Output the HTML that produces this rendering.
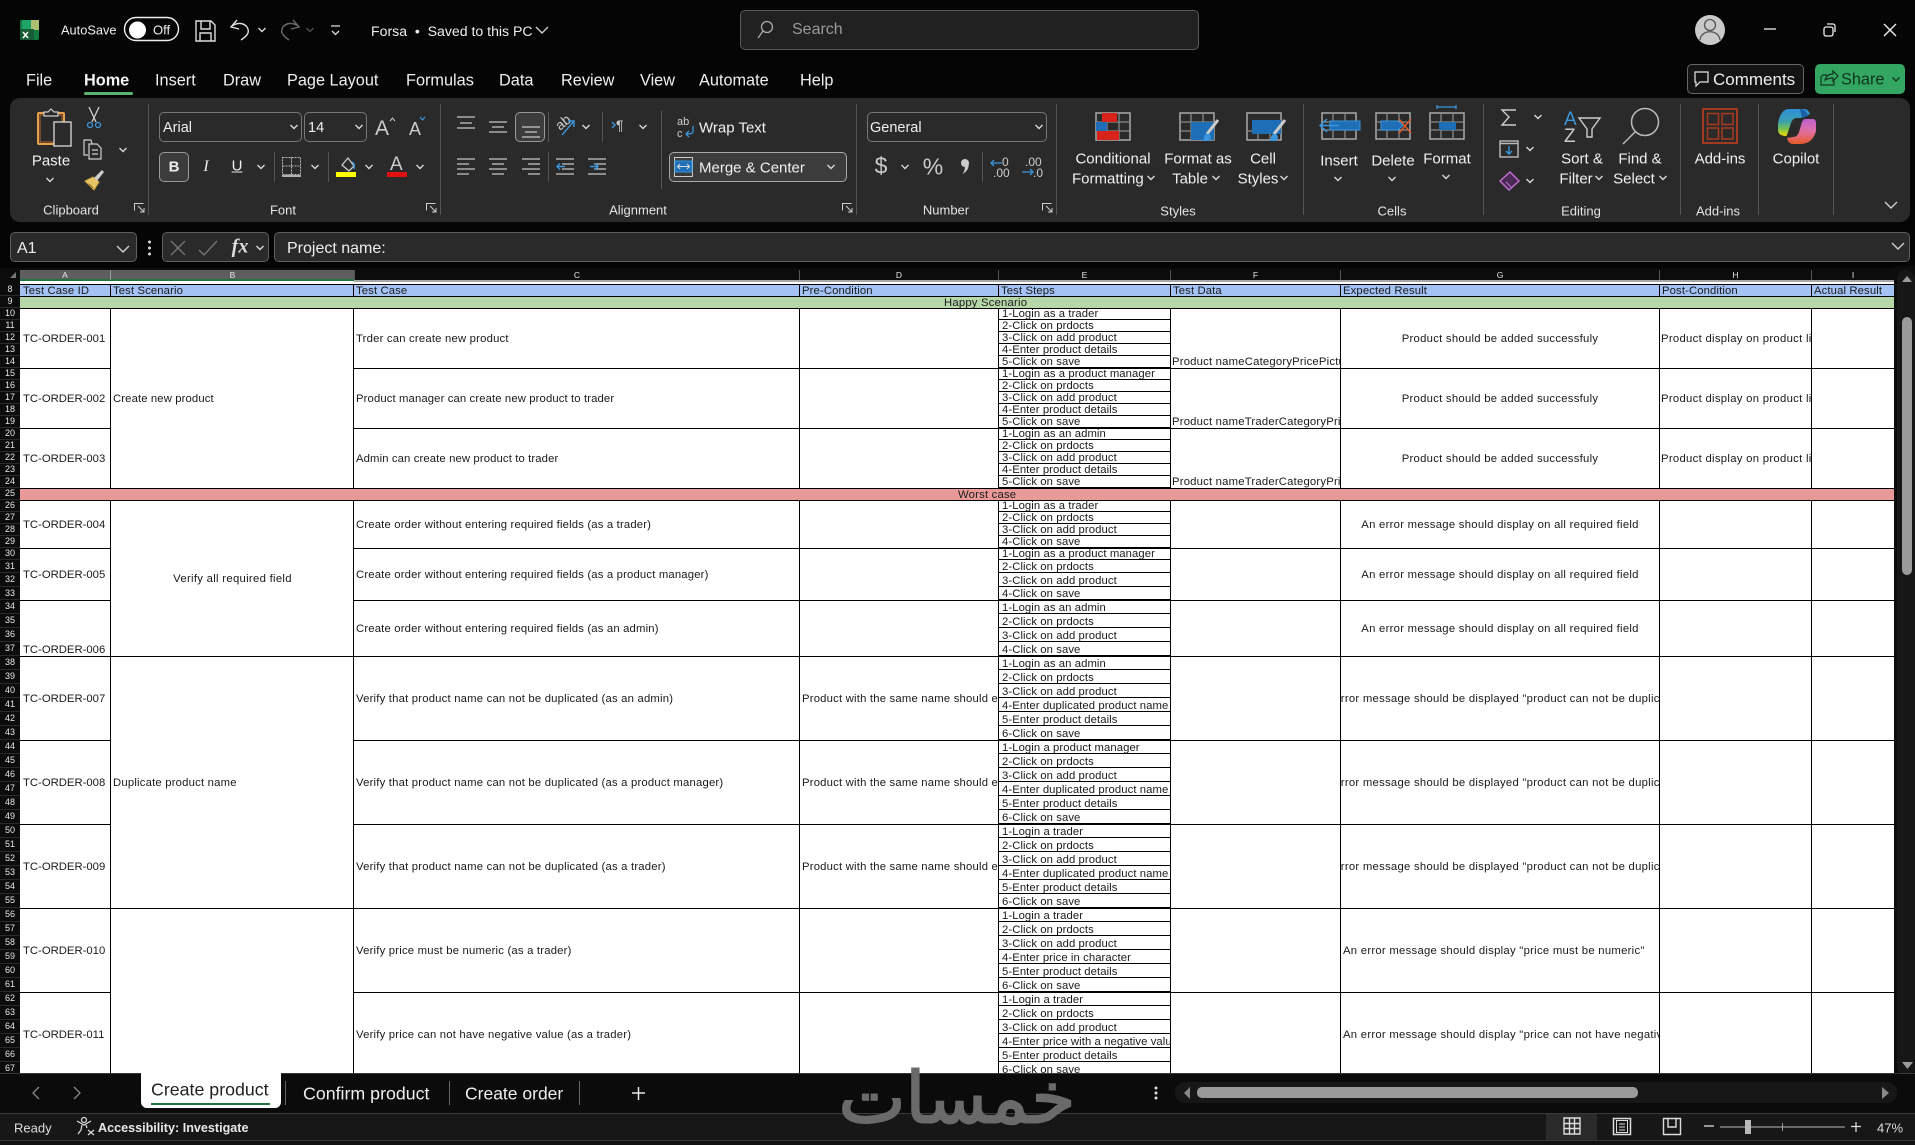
<!DOCTYPE html>
<html lang="en"><head><meta charset="utf-8"><title>Forsa - Excel</title>
<style>
html,body{margin:0;padding:0;background:#050505}
body{position:relative;width:1915px;height:1145px;overflow:hidden;font-family:"Liberation Sans",sans-serif;color:#eee}
.a{position:absolute;display:block}
.m{position:absolute;white-space:nowrap;transform:translate(-50%,-50%)}
.l{position:absolute;white-space:nowrap;transform:translateY(-50%)}
.box{position:absolute;box-sizing:border-box;background:#2a2a2a;border:1px solid #5f5f5f;border-radius:5px}
.tb{font-size:16.3px}
.rb{font-size:15px;color:#f0f0f0}
.gl{font-size:13px;color:#e4e4e4}
#sheet{position:absolute;left:0;top:0;width:1894px;height:1073px;overflow:hidden}
#sheet .a{position:absolute}
.v{position:absolute;width:1px;top:284px;height:800px;background:#000}
.h{position:absolute;height:1px;background:#000}
.hf{left:20px;width:1874px}
.c{position:absolute;box-sizing:border-box;display:flex;align-items:center;overflow:hidden;white-space:nowrap;padding:2px 3px 0;font-size:11.3px;color:#1a1a1a;line-height:12px;letter-spacing:.12px}
.ctr{justify-content:center}
.btm{align-items:flex-end;padding-top:0}
.an{letter-spacing:0}
.gc{letter-spacing:.27px}
.hc{letter-spacing:.3px}
.fc{letter-spacing:.2px}
.rh{position:absolute;left:0;top:284px;width:20px;background:#0c0c0c}
.rh b{display:block;font-weight:normal;line-height:13px;box-sizing:border-box;height:14px;font-size:9px;color:#e6e6e6;text-align:center;border-bottom:1px solid #2a2a2a}
.rh b.s{height:12px;line-height:11px}
.rh b.t{height:13px;line-height:12px}
.st{position:absolute;left:998px;top:308px;width:173px;box-sizing:border-box;border-left:1px solid #000;border-right:1px solid #000}
.st p{margin:0;height:14px;box-sizing:border-box;border-bottom:1px solid #000;padding-left:3px;font-size:11.3px;line-height:16px;color:#1a1a1a;white-space:nowrap;overflow:hidden;letter-spacing:.08px}
.st p.s{height:12px;line-height:13px}
.st p.t{height:13px;line-height:14px}
.st p.g{height:12px;border:0}
.ch{position:absolute;font-size:8.5px;color:#e8e8e8;top:270px;height:10px;line-height:11px;text-align:center;box-sizing:border-box;border-left:1px solid #555}
svg text{font-family:"Liberation Sans",sans-serif}
</style></head><body>

<!-- sheet -->
<div id="sheet">
<div class="a" style="left:0;top:268px;width:1894px;height:13px;background:#0c0c0c"></div>
<div class="a" style="left:20px;top:270px;width:335px;height:9px;background:#5e5e5e"></div>
<div class="a" style="left:20px;top:281px;width:1874px;height:800px;background:#fff"></div>
<div class="a" style="left:354px;top:280px;width:1540px;height:2px;background:#a8a8a8"></div>
<div class="a" style="left:20px;top:279px;width:334px;height:2px;background:#217346"></div>
<div class="a" style="left:0;top:281px;width:20px;height:3px;background:#0c0c0c"></div>
<div class="ch" style="left:20px;width:90px;border-left:0">A</div>
<div class="ch" style="left:110px;width:244px;border-left-color:#999">B</div>
<div class="ch" style="left:354px;width:445px">C</div>
<div class="ch" style="left:799px;width:199px">D</div>
<div class="ch" style="left:998px;width:172px">E</div>
<div class="ch" style="left:1170px;width:170px">F</div>
<div class="ch" style="left:1340px;width:319px">G</div>
<div class="ch" style="left:1659px;width:152px">H</div>
<div class="ch" style="left:1811px;width:83px">I</div>

<div class="a" style="left:20px;top:284px;width:1874px;height:12px;background:#a4c2f4"></div>
<i class="v" style="left:110px"></i><i class="v" style="left:353px"></i><i class="v" style="left:799px"></i><i class="v" style="left:998px"></i><i class="v" style="left:1170px"></i><i class="v" style="left:1340px"></i><i class="v" style="left:1659px"></i><i class="v" style="left:1811px"></i>

<div class="a" style="left:20px;top:296px;width:1874px;height:12px;background:#b6d7a8"></div>
<div class="a" style="left:20px;top:488px;width:1874px;height:12px;background:#ea9999"></div>
<i class="h hf" style="top:284px"></i><i class="h hf" style="top:296px"></i><i class="h hf" style="top:308px"></i><i class="h hf" style="top:488px"></i><i class="h hf" style="top:500px"></i><i class="h hf" style="top:656px"></i><i class="h hf" style="top:908px"></i>
<i class="h" style="left:20px;width:90px;top:368px"></i><i class="h" style="left:353px;width:1541px;top:368px"></i>
<i class="h" style="left:20px;width:90px;top:428px"></i><i class="h" style="left:353px;width:1541px;top:428px"></i>
<i class="h" style="left:20px;width:90px;top:548px"></i><i class="h" style="left:353px;width:1541px;top:548px"></i>
<i class="h" style="left:20px;width:90px;top:600px"></i><i class="h" style="left:353px;width:1541px;top:600px"></i>
<i class="h" style="left:20px;width:90px;top:740px"></i><i class="h" style="left:353px;width:1541px;top:740px"></i>
<i class="h" style="left:20px;width:90px;top:824px"></i><i class="h" style="left:353px;width:1541px;top:824px"></i>
<i class="h" style="left:20px;width:90px;top:992px"></i><i class="h" style="left:353px;width:1541px;top:992px"></i>

<!-- header row -->
<div class="c" style="left:20px;top:284px;width:90px;height:12px">Test Case ID</div>
<div class="c" style="left:110px;top:284px;width:243px;height:12px">Test Scenario</div>
<div class="c" style="left:353px;top:284px;width:446px;height:12px">Test Case</div>
<div class="c" style="left:799px;top:284px;width:199px;height:12px">Pre-Condition</div>
<div class="c" style="left:998px;top:284px;width:172px;height:12px">Test Steps</div>
<div class="c" style="left:1170px;top:284px;width:170px;height:12px">Test Data</div>
<div class="c" style="left:1340px;top:284px;width:319px;height:12px">Expected Result</div>
<div class="c" style="left:1659px;top:284px;width:152px;height:12px">Post-Condition</div>
<div class="c" style="left:1811px;top:284px;width:83px;height:12px">Actual Result</div>
<div class="l" style="left:944px;top:303px;font-size:11.3px;color:#1a1a1a;letter-spacing:.2px">Happy Scenario</div>

<!-- col A -->
<div class="c an" style="left:20px;top:308px;width:90px;height:60px">TC-ORDER-001</div>
<div class="c an" style="left:20px;top:368px;width:90px;height:60px">TC-ORDER-002</div>
<div class="c an" style="left:20px;top:428px;width:90px;height:60px">TC-ORDER-003</div>
<div class="c an" style="left:20px;top:500px;width:90px;height:48px">TC-ORDER-004</div>
<div class="c an" style="left:20px;top:548px;width:90px;height:52px">TC-ORDER-005</div>
<div class="c btm an" style="left:20px;top:600px;width:90px;height:56px">TC-ORDER-006</div>
<div class="c an" style="left:20px;top:656px;width:90px;height:84px">TC-ORDER-007</div>
<div class="c an" style="left:20px;top:740px;width:90px;height:84px">TC-ORDER-008</div>
<div class="c an" style="left:20px;top:824px;width:90px;height:84px">TC-ORDER-009</div>
<div class="c an" style="left:20px;top:908px;width:90px;height:84px">TC-ORDER-010</div>
<div class="c an" style="left:20px;top:992px;width:90px;height:84px">TC-ORDER-011</div>
<!-- col B -->
<div class="c" style="left:110px;top:308px;width:243px;height:180px">Create new product</div>
<div class="c ctr hc" style="left:111px;top:500px;width:243px;height:156px">Verify all required field</div>
<div class="c fc" style="left:110px;top:656px;width:243px;height:252px">Duplicate product name</div>
<!-- col C -->
<div class="c fc" style="left:353px;top:308px;width:446px;height:60px">Trder can create new product</div>
<div class="c" style="left:353px;top:368px;width:446px;height:60px">Product manager can create new product to trader</div>
<div class="c" style="left:353px;top:428px;width:446px;height:60px">Admin can create new product to trader</div>
<div class="c" style="left:353px;top:500px;width:446px;height:48px;letter-spacing:.17px">Create order without entering required fields (as a trader)</div>
<div class="c" style="left:353px;top:548px;width:446px;height:52px;letter-spacing:.17px">Create order without entering required fields (as a product manager)</div>
<div class="c" style="left:353px;top:600px;width:446px;height:56px;letter-spacing:.17px">Create order without entering required fields (as an admin)</div>
<div class="c fc" style="left:353px;top:656px;width:446px;height:84px">Verify that product name can not be duplicated (as an admin)</div>
<div class="c fc" style="left:353px;top:740px;width:446px;height:84px">Verify that product name can not be duplicated (as a product manager)</div>
<div class="c fc" style="left:353px;top:824px;width:446px;height:84px">Verify that product name can not be duplicated (as a trader)</div>
<div class="c fc" style="left:353px;top:908px;width:446px;height:84px">Verify price must be numeric (as a trader)</div>
<div class="c fc" style="left:353px;top:992px;width:446px;height:84px">Verify price can not have negative value (as a trader)</div>
<!-- col D -->
<div class="c fc" style="left:799px;top:656px;width:199px;height:84px">Product with the same name should exist</div>
<div class="c fc" style="left:799px;top:740px;width:199px;height:84px">Product with the same name should exist</div>
<div class="c fc" style="left:799px;top:824px;width:199px;height:84px">Product with the same name should exist</div>
<!-- col E -->
<div class="st">
<p class="s">1-Login as a trader</p><p class="s">2-Click on prdocts</p><p class="s">3-Click on add product</p><p class="s">4-Enter product details</p><p class="s">5-Click on save</p>
<p class="s">1-Login as a product manager</p><p class="s">2-Click on prdocts</p><p class="s">3-Click on add product</p><p class="s">4-Enter product details</p><p class="s">5-Click on save</p>
<p class="s">1-Login as an admin</p><p class="s">2-Click on prdocts</p><p class="s">3-Click on add product</p><p class="s">4-Enter product details</p><p class="s">5-Click on save</p>
<p class="g"></p>
<p class="s">1-Login as a trader</p><p class="s">2-Click on prdocts</p><p class="s">3-Click on add product</p><p class="s">4-Click on save</p>
<p class="s">1-Login as a product manager</p><p class="t">2-Click on prdocts</p><p>3-Click on add product</p><p class="t">4-Click on save</p>
<p>1-Login as an admin</p><p>2-Click on prdocts</p><p>3-Click on add product</p><p>4-Click on save</p>
<p>1-Login as an admin</p><p>2-Click on prdocts</p><p>3-Click on add product</p><p>4-Enter duplicated product name</p><p>5-Enter product details</p><p>6-Click on save</p>
<p>1-Login a product manager</p><p>2-Click on prdocts</p><p>3-Click on add product</p><p>4-Enter duplicated product name</p><p>5-Enter product details</p><p>6-Click on save</p>
<p>1-Login a trader</p><p>2-Click on prdocts</p><p>3-Click on add product</p><p>4-Enter duplicated product name</p><p>5-Enter product details</p><p>6-Click on save</p>
<p>1-Login a trader</p><p>2-Click on prdocts</p><p>3-Click on add product</p><p>4-Enter price in character</p><p>5-Enter product details</p><p>6-Click on save</p>
<p>1-Login a trader</p><p>2-Click on prdocts</p><p>3-Click on add product</p><p>4-Enter price with a negative value</p><p>5-Enter product details</p><p>6-Click on save</p>
</div>
<div class="a" style="left:998px;top:488px;width:173px;height:13px;background:#ea9999;border-top:1px solid #000;border-bottom:1px solid #000;box-sizing:border-box"></div>
<div class="l" style="left:958px;top:495px;font-size:11.3px;color:#1a1a1a;letter-spacing:.2px">Worst case</div>
<!-- col F -->
<div class="c btm fc" style="left:1170px;top:308px;width:170px;height:60px;padding-left:2px">Product nameCategoryPricePicture</div>
<div class="c btm fc" style="left:1170px;top:368px;width:170px;height:60px;padding-left:2px">Product nameTraderCategoryPrice</div>
<div class="c btm fc" style="left:1170px;top:428px;width:170px;height:60px;padding-left:2px">Product nameTraderCategoryPrice</div>
<!-- col G -->
<div class="c ctr gc" style="left:1341px;top:308px;width:318px;height:60px">Product should be added successfuly</div>
<div class="c ctr gc" style="left:1341px;top:368px;width:318px;height:60px">Product should be added successfuly</div>
<div class="c ctr gc" style="left:1341px;top:428px;width:318px;height:60px">Product should be added successfuly</div>
<div class="c ctr gc" style="left:1341px;top:500px;width:318px;height:48px">An error message should display on all required field</div>
<div class="c ctr gc" style="left:1341px;top:548px;width:318px;height:52px">An error message should display on all required field</div>
<div class="c ctr gc" style="left:1341px;top:600px;width:318px;height:56px">An error message should display on all required field</div>
<div class="c ctr gc" style="left:1341px;top:656px;width:318px;height:84px;padding:2px 0 0 20px">Error message should be displayed "product can not be duplicated"</div>
<div class="c ctr gc" style="left:1341px;top:740px;width:318px;height:84px;padding:2px 0 0 20px">Error message should be displayed "product can not be duplicated"</div>
<div class="c ctr gc" style="left:1341px;top:824px;width:318px;height:84px;padding:2px 0 0 20px">Error message should be displayed "product can not be duplicated"</div>
<div class="c gc" style="left:1340px;top:908px;width:319px;height:84px">An error message should display "price must be numeric"</div>
<div class="c gc" style="left:1340px;top:992px;width:319px;height:84px">An error message should display "price can not have negative value"</div>
<!-- col H -->
<div class="c hc" style="left:1659px;top:308px;width:152px;height:60px;padding-left:2px">Product display on product list</div>
<div class="c hc" style="left:1659px;top:368px;width:152px;height:60px;padding-left:2px">Product display on product list</div>
<div class="c hc" style="left:1659px;top:428px;width:152px;height:60px;padding-left:2px">Product display on product list</div>

<!-- row headers -->
<div class="rh">
<b class="s">8</b><b class="s">9</b><b class="s">10</b><b class="s">11</b><b class="s">12</b><b class="s">13</b><b class="s">14</b><b class="s">15</b><b class="s">16</b><b class="s">17</b><b class="s">18</b><b class="s">19</b><b class="s">20</b><b class="s">21</b><b class="s">22</b><b class="s">23</b><b class="s">24</b><b class="s">25</b><b class="s">26</b><b class="s">27</b><b class="s">28</b><b class="s">29</b><b class="s">30</b><b class="t">31</b><b>32</b><b class="t">33</b><b>34</b><b>35</b><b>36</b><b>37</b><b>38</b><b>39</b><b>40</b><b>41</b><b>42</b><b>43</b><b>44</b><b>45</b><b>46</b><b>47</b><b>48</b><b>49</b><b>50</b><b>51</b><b>52</b><b>53</b><b>54</b><b>55</b><b>56</b><b>57</b><b>58</b><b>59</b><b>60</b><b>61</b><b>62</b><b>63</b><b>64</b><b>65</b><b>66</b><b>67</b>
</div>
</div>

<!-- vertical scrollbar -->
<div class="a" style="left:1894px;top:266px;width:21px;height:812px;background:#0c0c0c"></div>
<div class="a" style="left:1897px;top:270px;width:18px;height:806px;background:#161616;border-radius:9px"></div>
<div class="a" style="left:1902px;top:317px;width:10px;height:258px;background:#9a9a9a;border-radius:5px"></div>

<!-- ribbon + bars -->
<div class="a" style="left:10px;top:98px;width:1900px;height:124px;background:#2a2a2a;border-radius:10px"></div>
<div class="box" style="left:740px;top:10px;width:459px;height:40px;background:#212121;border-color:#5a5a5a"></div>
<div class="box" style="left:1687px;top:64px;width:117px;height:30px;background:#141414;border-color:#666"></div>
<div class="a" style="left:1815px;top:64px;width:90px;height:30px;background:#33a762;border-radius:5px"></div>
<div class="box" style="left:10px;top:232px;width:127px;height:30px"></div>
<div class="box" style="left:162px;top:232px;width:107px;height:30px"></div>
<div class="box" style="left:274px;top:232px;width:1636px;height:30px"></div>
<div class="box" style="left:159px;top:112px;width:143px;height:30px;border-color:#777"></div>
<div class="box" style="left:304px;top:112px;width:63px;height:30px;border-color:#777"></div>
<div class="box" style="left:159px;top:152px;width:30px;height:30px;background:#3c3c3c;border-color:#999"></div>
<div class="box" style="left:515px;top:112px;width:30px;height:30px;background:#3c3c3c;border-color:#999"></div>
<div class="box" style="left:669px;top:152px;width:178px;height:30px;background:#3c3c3c;border-color:#aaa"></div>
<div class="box" style="left:867px;top:112px;width:180px;height:30px;border-color:#777"></div>

<!-- bottom -->
<div class="a" style="left:0;top:1073px;width:1915px;height:40px;background:#0b0b0b;border-top:1px solid #383838;box-sizing:border-box"></div>
<div class="a" style="left:0;top:1113px;width:1915px;height:27px;background:#171717;border-top:1px solid #3a3a3a;box-sizing:border-box"></div>
<div class="a" style="left:0;top:1140px;width:1915px;height:5px;background:#111;border-top:1px solid #3a3a3a;box-sizing:border-box"></div>
<div class="a" style="left:141px;top:1073px;width:140px;height:35px;background:#fff;border-radius:0 0 6px 6px"></div>
<div class="a" style="left:151px;top:1103px;width:119px;height:2px;background:#217346"></div>
<div class="a" style="left:1175px;top:1082px;width:722px;height:21px;background:#171717;border-radius:10px"></div>
<div class="a" style="left:1197px;top:1087px;width:441px;height:11px;background:#9a9a9a;border-radius:5px"></div>
<div class="a" style="left:1546px;top:1114px;width:51px;height:26px;background:#2a2a2a"></div>

<!-- watermark -->
<div class="m" style="left:957px;top:1098px;font-family:'DejaVu Sans',sans-serif;font-size:71px;color:#6a6a6a;-webkit-text-stroke:2px #6a6a6a;direction:rtl" lang="ar">خمسات</div>

<!-- titlebar text -->
<span class="l" style="left:61px;top:30px;font-size:12.8px">AutoSave</span>
<span class="l" style="left:153px;top:30px;font-size:13px">Off</span>
<span class="l" style="left:371px;top:31px;font-size:14.1px">Forsa &nbsp;•&nbsp; Saved to this PC</span>
<span class="l" style="left:792px;top:30px;font-size:16px;color:#9a9a9a">Search</span>

<!-- tabs -->
<span class="l tb" style="left:26px;top:81px">File</span>
<span class="l tb" style="left:84px;top:81px;font-weight:bold;color:#f4f4f4">Home</span>
<div class="a" style="left:84px;top:92px;width:49px;height:3px;background:#5cb36f;border-radius:2px"></div>
<span class="l tb" style="left:155px;top:81px">Insert</span>
<span class="l tb" style="left:223px;top:81px">Draw</span>
<span class="l tb" style="left:287px;top:81px">Page Layout</span>
<span class="l tb" style="left:406px;top:81px">Formulas</span>
<span class="l tb" style="left:499px;top:81px">Data</span>
<span class="l tb" style="left:561px;top:81px">Review</span>
<span class="l tb" style="left:640px;top:81px">View</span>
<span class="l tb" style="left:699px;top:81px">Automate</span>
<span class="l tb" style="left:800px;top:81px">Help</span>
<span class="l" style="left:1713px;top:80px;font-size:17px">Comments</span>
<span class="l tb" style="left:1841px;top:80px;color:#10331e">Share</span>

<!-- ribbon text -->
<span class="m rb" style="left:51px;top:161px">Paste</span>
<span class="l" style="left:163px;top:128px;font-size:14.5px">Arial</span>
<span class="l" style="left:308px;top:128px;font-size:14.5px">14</span>
<span class="m" style="left:174px;top:167px;font-size:15px;font-weight:bold">B</span>
<span class="m" style="left:206px;top:167px;font-size:16px;font-style:italic;font-family:'Liberation Serif',serif">I</span>
<span class="m" style="left:237px;top:166px;font-size:15px;text-decoration:underline">U</span>
<span class="l rb" style="left:699px;top:128px">Wrap Text</span>
<span class="l rb" style="left:699px;top:168px">Merge &amp; Center</span>
<span class="l" style="left:870px;top:128px;font-size:14.5px">General</span>
<span class="m" style="left:881px;top:166px;font-size:23px;color:#ccc">$</span>
<span class="m" style="left:933px;top:167px;font-size:23px;color:#ccc">%</span>
<span class="m rb" style="left:1113px;top:159px">Conditional</span>
<span class="l rb" style="left:1072px;top:179px">Formatting</span>
<span class="m rb" style="left:1198px;top:159px">Format as</span>
<span class="m rb" style="left:1190px;top:179px">Table</span>
<span class="m rb" style="left:1263px;top:159px">Cell</span>
<span class="m rb" style="left:1258px;top:179px">Styles</span>
<span class="m rb" style="left:1339px;top:161px">Insert</span>
<span class="m rb" style="left:1393px;top:161px">Delete</span>
<span class="m rb" style="left:1447px;top:159px">Format</span>
<span class="m rb" style="left:1582px;top:159px">Sort &amp;</span>
<span class="m rb" style="left:1576px;top:179px">Filter</span>
<span class="m rb" style="left:1640px;top:159px">Find &amp;</span>
<span class="m rb" style="left:1634px;top:179px">Select</span>
<span class="m rb" style="left:1720px;top:159px">Add-ins</span>
<span class="m rb" style="left:1796px;top:159px">Copilot</span>
<span class="m gl" style="left:71px;top:210px">Clipboard</span>
<span class="m gl" style="left:283px;top:210px">Font</span>
<span class="m gl" style="left:638px;top:210px">Alignment</span>
<span class="m gl" style="left:946px;top:210px">Number</span>
<span class="m gl" style="left:1178px;top:211px">Styles</span>
<span class="m gl" style="left:1392px;top:211px">Cells</span>
<span class="m gl" style="left:1581px;top:211px">Editing</span>
<span class="m gl" style="left:1718px;top:211px">Add-ins</span>

<!-- formula bar text -->
<span class="l" style="left:17px;top:249px;font-size:16px">A1</span>
<span class="l" style="left:287px;top:249px;font-size:16px">Project name:</span>
<span class="m" style="left:240px;top:247px;font-family:'Liberation Serif',serif;font-style:italic;font-weight:bold;font-size:20px;color:#ddd">fx</span>

<!-- bottom text -->
<span class="l" style="left:151px;top:1090px;font-size:17.8px;color:#222">Create product</span>
<span class="l" style="left:303px;top:1094px;font-size:17.8px">Confirm product</span>
<span class="l" style="left:465px;top:1094px;font-size:17.5px">Create order</span>
<span class="l" style="left:14px;top:1128px;font-size:13px;color:#ddd">Ready</span>
<span class="l" style="left:98px;top:1128px;font-size:12.6px;font-weight:bold;color:#e8e8e8">Accessibility: Investigate</span>
<span class="l" style="left:1877px;top:1128px;font-size:13px;color:#ddd">47%</span>

<!-- icons -->
<svg class="a" style="left:0;top:0" width="1915" height="1145" viewBox="0 0 1915 1145" fill="none">
<defs>
<path id="ch" d="M-3.5 -2L0 1.5L3.5 -2" stroke="#d8d8d8" stroke-width="1.4" fill="none"/>
<path id="cl" d="M-6 -3L0 3L6 -3" stroke="#cfcfcf" stroke-width="1.4" fill="none"/>
<linearGradient id="cpL" x1="0" y1="0" x2="0" y2="1"><stop offset="0" stop-color="#2f8fd8"/><stop offset=".45" stop-color="#3aa0b0"/><stop offset=".7" stop-color="#6cbf5c"/><stop offset="1" stop-color="#f4d800"/></linearGradient>
<linearGradient id="cpR" x1="0" y1="0" x2="0" y2="1"><stop offset="0" stop-color="#c060d0"/><stop offset=".5" stop-color="#e070a0"/><stop offset="1" stop-color="#e85a28"/></linearGradient>
</defs>

<!-- Excel logo -->
<rect x="20" y="20" width="19" height="20" rx="2" fill="#107c41"/><rect x="26" y="20" width="13" height="10" fill="#a8c070"/><rect x="22" y="20" width="9" height="10" fill="#21a366"/><rect x="20" y="29" width="14" height="11" rx="1" fill="#185c37"/><path d="M23 32l5 6M28 32l-5 6" stroke="#fff" stroke-width="1.5"/>
<!-- toggle -->
<rect x="124.500" y="17.500" width="54" height="23" rx="11.500" stroke="#eee" stroke-width="1.400"/><circle cx="137.500" cy="30" r="8.500" fill="#fff"/>
<!-- save -->
<path d="M196 21h15l4 4v16h-19zM201 21v8h9v-8M200 41v-8h11v8" stroke="#ddd" stroke-width="1.400"/>
<!-- undo / redo -->
<path d="M237 20l-6 7 8 2M232 26c6-4 12-3 15 1 3 5 1 8-6 13" stroke="#ddd" stroke-width="1.400"/>
<path d="M293 20l6 7-8 2M298 26c-6-4-12-3-15 1-3 5-1 8 6 13" stroke="#6a6a6a" stroke-width="1.400"/>
<use href="#ch" x="262" y="30"/><use href="#ch" x="310" y="30" opacity=".35"/>
<path d="M331 26h9M332 31l3.500 3.500 3.500-3.500" stroke="#ddd" stroke-width="1.300"/>
<use href="#cl" x="542" y="30"/>
<!-- search -->
<circle cx="767" cy="27" r="5.500" stroke="#aaa" stroke-width="1.300"/><path d="M763 31l-5 7" stroke="#aaa" stroke-width="1.300"/>
<!-- window -->
<circle cx="1710" cy="30" r="15" fill="#c9c9c9"/><circle cx="1710" cy="25" r="5.500" stroke="#555" stroke-width="1.300"/><path d="M1700 40c1-11 19-11 20 0" stroke="#555" stroke-width="1.300"/>
<path d="M1764 29h12" stroke="#eee" stroke-width="1.300"/>
<rect x="1824" y="27" width="9" height="9" rx="2" stroke="#eee" stroke-width="1.300"/><path d="M1827 24h6a2 2 0 0 1 2 2v6" stroke="#eee" stroke-width="1.300"/>
<path d="M1884 24l12 12M1896 24l-12 12" stroke="#eee" stroke-width="1.400"/>
<!-- comments / share -->
<path d="M1695 72h13v10h-8l-4 4v-4h-1z" stroke="#e6e6e6" stroke-width="1.200"/>
<path d="M1827 75h-4l-2 2v8h13v-4M1825 80c1-4 4-6 8-6v-3l5 5-5 5v-3c-4 0-6 1-8 2z" stroke="#12351f" stroke-width="1.200"/>
<path d="M1892.500 77.500l3.500 3.500 3.500-3.500" stroke="#12351f" stroke-width="1.400"/>

<!-- group separators -->
<path d="M148.500 104v111M440.500 104v111M856.500 104v111M1056.500 104v111M1303.500 104v111M1483.500 104v111M1680.500 104v111M1758.500 104v111M1833.500 104v111M274.500 152v30M328.500 152v30M548.500 112v30M548.500 152v30M602.500 112v30M661.500 111v78M982.500 152v30" stroke="#555"/>

<!-- launchers -->
<path d="M134.500 210.500v-7h9M138 206l6 6M144 208v4h-4M426.500 210.500v-7h9M430 206l6 6M436 208v4h-4M842.500 210.500v-7h9M846 206l6 6M852 208v4h-4M1042.500 210.500v-7h9M1046 206l6 6M1052 208v4h-4" stroke="#cfcfcf"/>

<!-- paste -->
<rect x="38" y="113" width="26" height="31" rx="1" stroke="#e8a04c" stroke-width="2"/><rect x="40" y="115" width="22" height="27" stroke="#b06a30"/>
<rect x="54" y="122" width="17" height="24" fill="#2a2a2a" stroke="#cfcfcf" stroke-width="1.400"/>
<path d="M44 116v-4h4l3-3 3 3h4v4z" fill="#2a2a2a" stroke="#cfcfcf" stroke-width="1.200"/>
<!-- cut -->
<path d="M89 107l7 15M99 107l-7 15" stroke="#cfcfcf" stroke-width="1.300"/><circle cx="90" cy="125" r="2.500" stroke="#3a96dd" stroke-width="1.300"/><circle cx="98" cy="125" r="2.500" stroke="#3a96dd" stroke-width="1.300"/>
<!-- copy -->
<path d="M88 155h-4v-15h7l1 4M89 144h8l4 4v11h-12zM92 150h6M92 154h6" stroke="#cfcfcf" stroke-width="1.200"/>
<use href="#ch" x="123" y="150"/>
<!-- painter -->
<path d="M85 181l9 9 5-8-6-5z" fill="#e8c468" stroke="#caa240"/><path d="M94 178l8-8 2 2-7 9z" fill="#cfcfcf"/><path d="M89 184l4 4" stroke="#8a6a20"/>
<use href="#ch" x="50" y="180"/>
<!-- font chevs -->
<use href="#ch" x="294" y="127"/><use href="#ch" x="359" y="127"/><use href="#ch" x="261" y="167"/><use href="#ch" x="315" y="167"/><use href="#ch" x="369" y="167"/><use href="#ch" x="420" y="167"/>
<text x="375" y="135" font-size="21" fill="#ccc">A</text><path d="M390 121l2.500-3 2.500 3" stroke="#ccc"/>
<text x="409" y="135" font-size="18" fill="#ccc">A</text><path d="M420 117l2.500 3 2.500-3" stroke="#3a96dd" stroke-width="1.200"/>
<!-- borders -->
<path d="M282.500 157.500h18v17h-18zM291.500 157.500v17M282.500 166h18" stroke="#bbb" stroke-dasharray="2 1"/><path d="M282 176h19" stroke="#ddd" stroke-width="1.500"/>
<!-- fill -->
<path d="M342 165l6-7 6 8-5 5z" stroke="#ccc" stroke-width="1.300"/><path d="M352 162c2 1 3 3 2 7" stroke="#3a96dd" stroke-width="1.400"/><rect x="336" y="172" width="20" height="5" fill="#ffff00"/>
<text x="390" y="170" font-size="19" fill="#ccc">A</text><rect x="387" y="172" width="20" height="5" fill="#e01010"/>
<!-- align -->
<path d="M457 117h18M460 123h12M457 128h18M489 122h18M492 127h12M489 132h18M522 127h18M525 132h12M522 137h18M457 159h18M457 164h12M457 169h18M457 174h12M489 159h18M492 164h12M489 169h18M492 174h12M522 159h18M528 164h12M522 169h18M528 174h12" stroke="#c8c8c8" stroke-width="1.300"/>
<path d="M556 159h18M562 164h12M562 169h12M556 174h18M588 159h18M594 164h12M594 169h12M588 174h18" stroke="#c8c8c8" stroke-width="1.300"/>
<path d="M557 166.500h8M560 163.500l-3 3 3 3M590 166.500h8M595 163.500l3 3-3 3" stroke="#3a96dd" stroke-width="1.400"/>
<text x="555" y="127" font-size="14" fill="#ccc" transform="rotate(-40 563 122)">ab</text><path d="M562 135l12-14M568 121h6v6" stroke="#3a96dd" stroke-width="1.400"/><use href="#ch" x="586" y="127"/>
<path d="M612 122l3 3-3 3" stroke="#3a96dd" stroke-width="1.400"/><text x="616" y="130" font-size="14" fill="#ccc">¶</text><use href="#ch" x="643" y="127"/>
<!-- wrap -->
<text x="677" y="125" font-size="11" fill="#ccc">ab</text><text x="677" y="137" font-size="11" fill="#ccc">c</text><path d="M693 126v5c0 3-3 3-7 3M689 131l-3 3 3 3" stroke="#3a96dd" stroke-width="1.300"/>
<!-- merge -->
<rect x="674.500" y="157.500" width="18" height="19" stroke="#ccc"/><rect x="675" y="161" width="17" height="11" fill="#1e6fb8" stroke="#3a96dd"/><path d="M678 166.500h11M680 164l-2.500 2.500 2.500 2.500M687 164l2.500 2.500-2.500 2.500" stroke="#ddd"/>
<use href="#ch" x="831" y="167"/><use href="#ch" x="1039" y="127"/><use href="#ch" x="905" y="167"/>
<!-- comma style -->
<circle cx="965" cy="163" r="4" fill="#ccc"/><path d="M968.500 163c1 5-2 9-6 11 2-3 3-6 2-9z" fill="#ccc"/>
<!-- dec -->
<text x="1002" y="166" font-size="12" fill="#ccc">0</text><text x="993" y="177" font-size="12" fill="#ccc">.00</text><path d="M1002 163h-11M994 160l-3 3 3 3" stroke="#3a96dd" stroke-width="1.300"/>
<text x="1025" y="166" font-size="12" fill="#ccc">.00</text><text x="1033" y="177" font-size="12" fill="#ccc">.0</text><path d="M1022 172h11M1030 169l3 3-3 3" stroke="#3a96dd" stroke-width="1.300"/>

<!-- conditional formatting -->
<rect x="1096" y="113" width="34" height="27" fill="#2a2a2a" stroke="#aaa" stroke-width="1.500"/><path d="M1107 113v27M1119 113v27M1096 122h34M1096 131h34" stroke="#8a8a8a" stroke-width="1.300"/><rect x="1102" y="113" width="15" height="9" fill="#d8231a"/><rect x="1096" y="122" width="11" height="9" fill="#1e6fb8"/><rect x="1097" y="131" width="22" height="9" fill="#d8231a"/>
<!-- format as table -->
<rect x="1180" y="113" width="34" height="27" stroke="#aaa" stroke-width="1.500"/><path d="M1191 113v27M1203 113v27M1180 122h34M1180 131h34" stroke="#8a8a8a" stroke-width="1.300"/><rect x="1191" y="122" width="23" height="18" fill="#1e6fb8"/><path d="M1218 120l-11 14" stroke="#ccc" stroke-width="3"/><path d="M1209 134c-3-1-5 1-5 4 0 2-2 3-3 3h8c2-2 3-5 0-7z" fill="#3a96dd"/>
<!-- cell styles -->
<rect x="1247" y="113" width="34" height="27" stroke="#aaa" stroke-width="1.500"/><path d="M1247 131h34M1258 131v9M1270 131v9" stroke="#8a8a8a" stroke-width="1.300"/><rect x="1252" y="120" width="29" height="14" fill="#1e6fb8"/><path d="M1285 120l-11 14" stroke="#ccc" stroke-width="3"/><path d="M1276 134c-3-1-5 1-5 4 0 2-2 3-3 3h8c2-2 3-5 0-7z" fill="#3a96dd"/>
<use href="#ch" x="1151" y="178"/><use href="#ch" x="1216" y="178"/><use href="#ch" x="1284" y="178"/>
<!-- insert -->
<rect x="1322" y="113" width="34" height="26" stroke="#aaa" stroke-width="1.500"/><path d="M1333 113v26M1345 113v26M1322 122h34M1322 130h34" stroke="#8a8a8a" stroke-width="1.300"/><rect x="1330" y="121" width="30" height="9" fill="#1e6fb8" stroke="#3a96dd"/><path d="M1339 125.500h-18M1327 119l-7 6.500 7 6.500" stroke="#3a96dd" stroke-width="1.500"/>
<!-- delete -->
<rect x="1376" y="113" width="34" height="26" stroke="#aaa" stroke-width="1.500"/><path d="M1387 113v26M1399 113v26M1376 122h34M1376 130h34" stroke="#8a8a8a" stroke-width="1.300"/><path d="M1381 121h17l5 4.500-5 4.500h-17z" fill="#1e6fb8" stroke="#3a96dd"/><path d="M1399 119l12 14M1411 119l-12 14" stroke="#e05a28" stroke-width="1.500"/>
<!-- format -->
<path d="M1437 107h19M1437 105v4M1456 105v4" stroke="#3a96dd" stroke-width="1.300"/><rect x="1430" y="113" width="34" height="26" stroke="#aaa" stroke-width="1.500"/><path d="M1441 113v26M1453 113v26M1430 122h34M1430 130h34" stroke="#8a8a8a" stroke-width="1.300"/><rect x="1439" y="122" width="17" height="8" fill="#1e6fb8"/>
<use href="#ch" x="1338" y="179"/><use href="#ch" x="1392" y="179"/><use href="#ch" x="1446" y="177"/>
<!-- editing -->
<path d="M1516 110h-14l7 7-7 8h14" stroke="#ccc" stroke-width="1.400"/><use href="#ch" x="1538" y="117"/>
<rect x="1500" y="141" width="18" height="16" stroke="#bbb" stroke-width="1.400"/><path d="M1500 143.500h18" stroke="#bbb" stroke-width="1.400"/><path d="M1509 146v8M1506 151l3 3 3-3" stroke="#3a96dd" stroke-width="1.400"/><use href="#ch" x="1530" y="149"/>
<path d="M1500 181l10-9 9 9-10 9z" fill="#4a2a55" stroke="#c06fd0" stroke-width="1.500"/><path d="M1506 182l5 5" stroke="#c06fd0"/><use href="#ch" x="1530" y="181"/>
<text x="1564" y="125" font-size="19" fill="#3a96dd">A</text><text x="1564" y="142" font-size="19" fill="#ccc">Z</text>
<path d="M1579 118h21l-8 11v8h-5v-8z" stroke="#ccc" stroke-width="1.400"/>
<circle cx="1645" cy="122" r="13.500" stroke="#bbb" stroke-width="1.500"/><path d="M1635 132l-12 12" stroke="#bbb" stroke-width="1.500"/>
<use href="#ch" x="1599" y="178"/><use href="#ch" x="1663" y="178"/>
<!-- add-ins -->
<rect x="1703" y="109" width="34" height="34" stroke="#a33a1f" stroke-width="2"/><rect x="1707.500" y="113.500" width="11" height="11" stroke="#a33a1f" stroke-width="1.600"/><rect x="1722" y="113.500" width="11" height="11" stroke="#a33a1f" stroke-width="1.600"/><rect x="1707.500" y="128" width="11" height="11" stroke="#a33a1f" stroke-width="1.600"/><rect x="1722" y="128" width="11" height="11" stroke="#a33a1f" stroke-width="1.600"/>
<!-- copilot -->
<path d="M1789 109h15c3 0 5 2 6 5l-9 4h-4c-3 0-5 2-6 5l-4 12c-1 2-3 1-6 0-2-1-3-3-3-5v-6c1-7 4-15 11-15z" fill="url(#cpL)"/>
<path d="M1800 109c4 0 7 3 8 7l-6 2z" fill="#1a5fa8"/>
<path d="M1805 119h8c2 0 3 2 3 4v8c-2 8-7 13-16 13h-7c-3 0-5-2-6-6l6-1c3 0 5-2 6-5l3-10c1-2 2-3 3-3z" fill="url(#cpR)"/>
<use href="#cl" x="1891" y="205"/>
<!-- formula -->
<use href="#cl" x="123" y="249"/><circle cx="149.500" cy="242" r="1.500" fill="#ddd"/><circle cx="149.500" cy="248" r="1.500" fill="#ddd"/><circle cx="149.500" cy="254" r="1.500" fill="#ddd"/>
<path d="M171 241l14 14M185 241l-14 14" stroke="#777" stroke-width="1.300"/><path d="M199 250l5 5 13-14" stroke="#777" stroke-width="1.300"/>
<use href="#ch" x="260" y="248"/><use href="#cl" x="1898" y="246"/>
<!-- corner -->
<path d="M16 272v6h-6z" fill="#777"/>
<!-- vscroll arrows -->
<path d="M1907 276l5 6h-10z" fill="#9a9a9a"/><path d="M1902 1062h11l-5.500 7z" fill="#9a9a9a"/>
<!-- tabs -->
<path d="M39 1087l-6 6 6 6" stroke="#888" stroke-width="1.300"/><path d="M74 1087l6 6-6 6" stroke="#888" stroke-width="1.300"/>
<path d="M285.500 1081v24M449.500 1081v24M579.500 1081v24" stroke="#666"/>
<path d="M632 1093h13M638.500 1087v13" stroke="#e8e8e8" stroke-width="1.500"/>
<circle cx="1156" cy="1088" r="1.500" fill="#ddd"/><circle cx="1156" cy="1093" r="1.500" fill="#ddd"/><circle cx="1156" cy="1098" r="1.500" fill="#ddd"/>
<path d="M1190 1087v12l-6-6z" fill="#888"/><path d="M1882 1087v12l7-6z" fill="#888"/>
<!-- status -->
<circle cx="84" cy="1120" r="2.500" stroke="#ddd" stroke-width="1.200"/><path d="M77 1121l7 4 7-4M82 1125l-1 5-3 4M86 1125l1 3M88 1130l6 5M94 1130l-6 5" stroke="#ddd" stroke-width="1.200"/>
<path d="M1564 1118h16v16h-16zM1564 1123.500h16M1564 1128.500h16M1569.500 1118v16M1574.500 1118v16" stroke="#ddd" stroke-width="1.400"/>
<rect x="1613.500" y="1118.500" width="17" height="16" stroke="#ddd" stroke-width="1.500"/><rect x="1616.500" y="1120.500" width="11" height="12" stroke="#ddd"/><path d="M1619 1124h6M1619 1127h6M1619 1130h6" stroke="#ddd"/>
<path d="M1663.500 1118.500h17v16h-17zM1668 1118v9h8v-9" stroke="#ddd" stroke-width="1.400"/>
<path d="M1704 1126h10" stroke="#ddd" stroke-width="1.300"/><path d="M1720 1127h125" stroke="#999" stroke-width="1.200"/><rect x="1745" y="1120" width="6" height="14" fill="#b8b8b8"/><path d="M1782.500 1123v8" stroke="#999"/><path d="M1851 1126.500h10M1856 1122v10" stroke="#ddd" stroke-width="1.300"/>
</svg>
</body></html>
